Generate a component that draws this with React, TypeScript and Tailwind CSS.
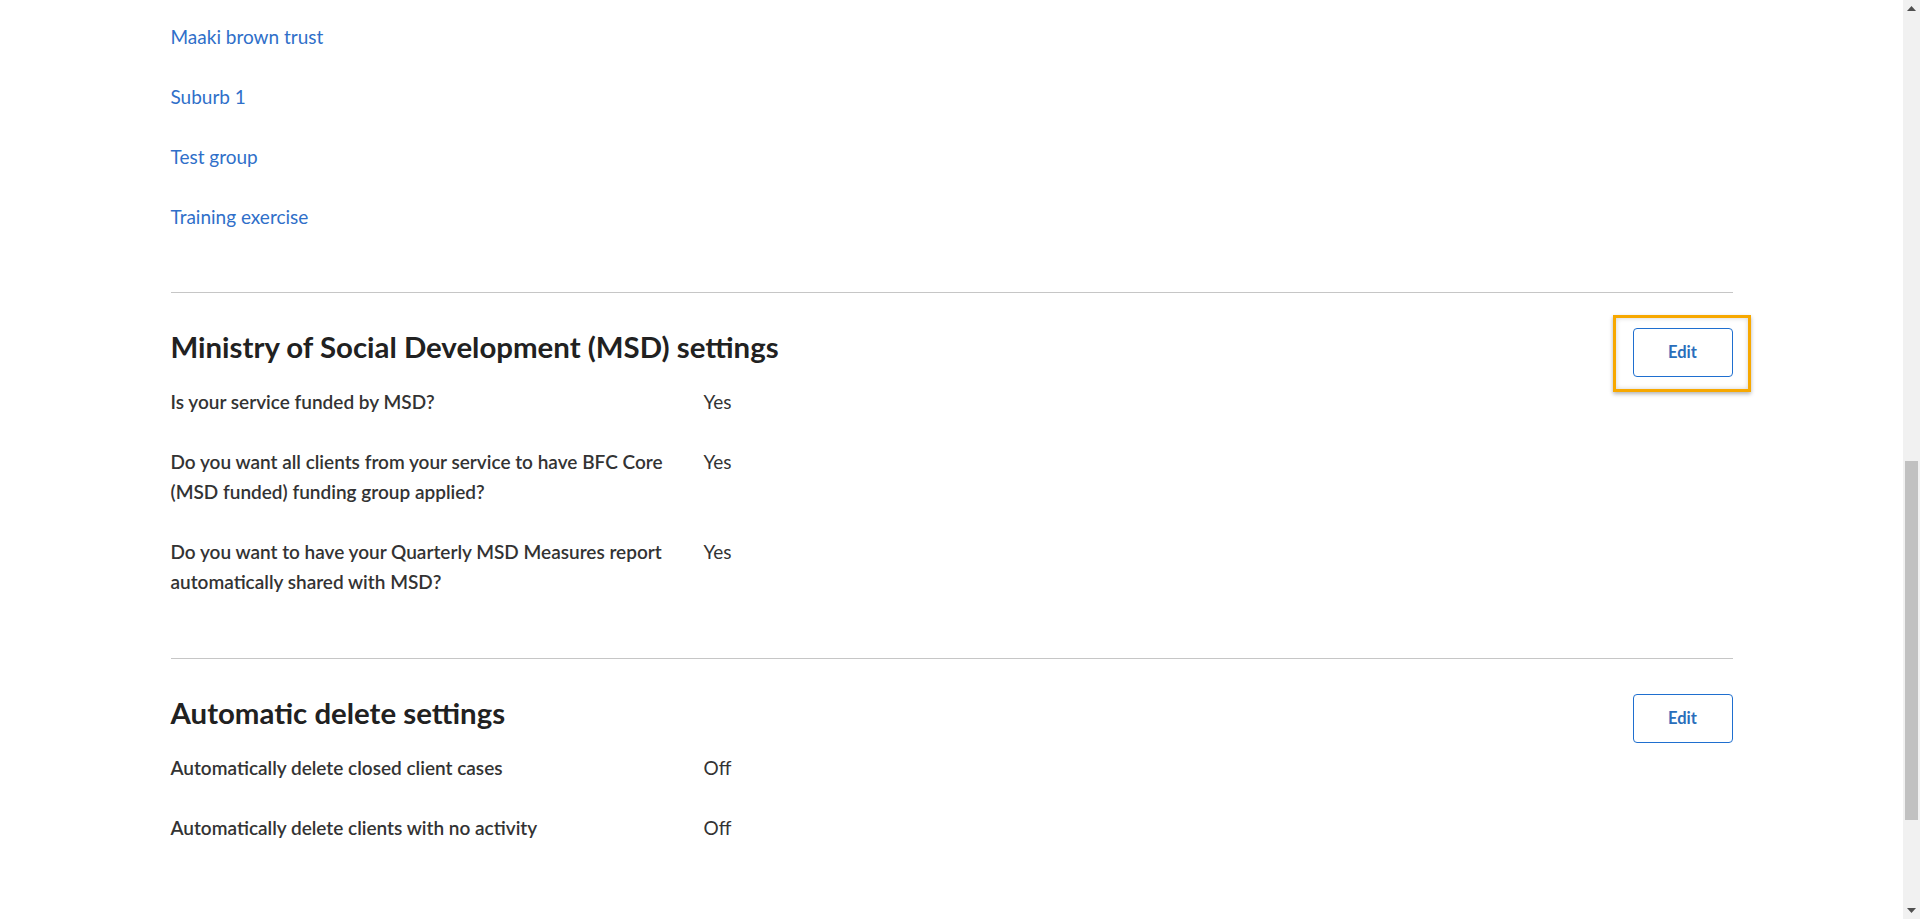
import React from "react";

const groups = ["Maaki brown trust", "Suburb 1", "Test group", "Training exercise"];

type Row = { label: React.ReactNode; value: string };

const msdRows: Row[] = [
  { label: "Is your service funded by MSD?", value: "Yes" },
  {
    label: (
      <>
        Do you want all clients from your service to have BFC Core
        <br />
        (MSD funded) funding group applied?
      </>
    ),
    value: "Yes",
  },
  {
    label: (
      <>
        Do you want to have your Quarterly MSD Measures report
        <br />
        automatically shared with MSD?
      </>
    ),
    value: "Yes",
  },
];

const deleteRows: Row[] = [
  { label: "Automatically delete closed client cases", value: "Off" },
  { label: "Automatically delete clients with no activity", value: "Off" },
];

const EditButton = ({ focused }: { focused?: boolean }) => (
  <div className="relative shrink-0">
    {focused && (
      <span className="
        absolute -left-[20px] -right-[18px] -top-[13px] -bottom-[15px]
        border-[3px] border-[#f7a800]
        shadow-[0_2px_4px_rgba(0,0,0,0.3),inset_0_0_5px_rgba(0,0,0,0.18)]
      "/>
    )}
    <button className="
      relative
      w-[100px] h-[49px]
      rounded-[4px]
      border border-[#1f6fcf]
      bg-white
      text-[16.5px] font-bold text-[#2a6ebb]
    ">
      Edit
    </button>
  </div>
);

const SettingsSection = (
  {
    title,
    rows,
    focused
  }: {
    title: string,
    rows: Row[],
    focused?: boolean
  }) => {
  return (
    <section className="border-t border-[#c6c6c6] pt-[35px] pb-[61px]">
      <div className="flex justify-between items-start">
        <h2 className="text-[29.4px] leading-[1.2] font-bold text-[#212121] mt-[1px]">{title}</h2>
        <EditButton focused={focused}/>
      </div>
      <dl className="mt-[10px] flex flex-col gap-[30px]">
        {rows.map((row, i) => (
          <div key={i} className="grid grid-cols-[533px_1fr] text-[19px] leading-[30px] text-[#333]">
            <dt className="font-semibold">{row.label}</dt>
            <dd>{row.value}</dd>
          </div>
        ))}
      </dl>
    </section>
  );
};

export default function App() {
  return (
    <div className="flex h-[919px] overflow-hidden bg-white font-[Lato,'Liberation_Sans',sans-serif]">
      <main className="flex-1">
        <div className="mx-auto w-[1562px]">
          <ul className="pt-[22px] pb-[60px] flex flex-col gap-[30px] text-[19px] leading-[30px]">
            {groups.map((g) => (
              <li key={g}>
                <a href="#" className="text-[#2f6fc9]">{g}</a>
              </li>
            ))}
          </ul>
          <SettingsSection title="Ministry of Social Development (MSD) settings" rows={msdRows} focused/>
          <SettingsSection title="Automatic delete settings" rows={deleteRows}/>
        </div>
      </main>

      <div className="w-[17px] bg-[#f1f1f1] flex flex-col">
        <div className="h-[17px] flex items-center justify-center">
          <svg width="9" height="5" viewBox="0 0 9 5"><polygon points="0,5 4.5,0 9,5" fill="#505050"/></svg>
        </div>
        <div className="mt-[444px] mx-[2px] h-[359px] bg-[#c1c1c1]"/>
        <div className="flex-1"/>
        <div className="h-[17px] flex items-center justify-center">
          <svg width="9" height="5" viewBox="0 0 9 5"><polygon points="0,0 9,0 4.5,5" fill="#505050"/></svg>
        </div>
      </div>
    </div>
  );
}
